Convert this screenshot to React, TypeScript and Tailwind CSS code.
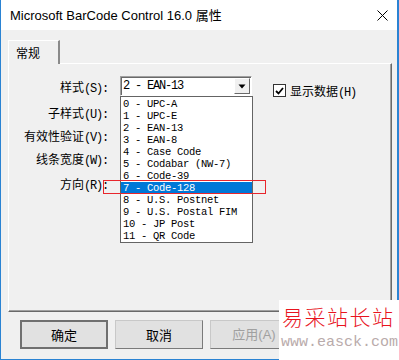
import React from 'react';

const CJK = "font-['Noto_Sans_CJK_SC',sans-serif]";
const MONO = "font-['Liberation_Mono','Noto_Sans_CJK_SC',monospace] text-[12px] tracking-[-1.2px]";
const LIST = "font-['Liberation_Mono',monospace] text-[10.5px] tracking-[-0.3px]";

const STYLES = [
  '0 - UPC-A',
  '1 - UPC-E',
  '2 - EAN-13',
  '3 - EAN-8',
  '4 - Case Code',
  '5 - Codabar (NW-7)',
  '6 - Code-39',
  '7 - Code-128',
  '8 - U.S. Postnet',
  '9 - U.S. Postal FIM',
  '10 - JP Post',
  '11 - QR Code',
];

// label in SimSun style: CJK part + half-width "(X):"
function Label({ zh, hotkey, colon = true }: { zh: string; hotkey: string; colon?: boolean }) {
  return (
    <span className="whitespace-nowrap leading-none">
      <span className={`${CJK} text-[12px] text-black`}>{zh}</span>
      <span className={`${MONO} text-black`}>
        ({hotkey}){colon ? ':' : ''}
      </span>
    </span>
  );
}

function Row({ zh, hotkey, className = '', children }: { zh: string; hotkey: string; className?: string; children?: React.ReactNode }) {
  return (
    <div className={`flex items-start h-[20px] ${className}`}>
      <div className="w-[99px] h-[20px] flex items-center justify-end">
        <Label zh={zh} hotkey={hotkey} />
      </div>
      {children}
    </div>
  );
}

function StyleCombo() {
  return (
    <div className="relative ml-[12px] w-[132px] h-[20px]">
      <div className="w-full h-full bg-white border border-t-[#a0a0a0] border-l-[#a0a0a0] border-r-white border-b-white shadow-[inset_1px_1px_0_#696969] flex items-center pl-[2px]">
        <span className={`${MONO} leading-none text-black flex-1`}>2 - EAN-13</span>
        <div className="w-[16px] h-[16px] mr-[1px] bg-[#f0f0f0] border border-t-white border-l-white border-r-[#696969] border-b-[#696969] flex items-center justify-center">
          <svg width="8" height="5" viewBox="0 0 8 5">
            <path d="M0.5 0.5h7L4 4.5z" fill="#000" />
          </svg>
        </div>
      </div>

      {/* open list */}
      <div className="absolute left-0 top-[20px] w-[133px] bg-white border border-[#646464] pt-[1px] z-20">
        {STYLES.map((s, i) => (
          <div
            key={s}
            className={`h-[12px] leading-[12px] overflow-hidden pl-[2px] whitespace-pre ${LIST} ${
              i === 7 ? 'bg-[#0078d7] text-white' : 'text-black'
            }`}
          >
            {s}
          </div>
        ))}
      </div>
    </div>
  );
}

function Btn({ children, primary, disabled }: { children: React.ReactNode; primary?: boolean; disabled?: boolean }) {
  return (
    <div
      className={`w-[88px] h-[29px] flex items-center justify-center bg-[#e1e1e1] ${
        primary
          ? 'border-2 border-[#6f6f6f]'
          : 'border border-t-[#c8c8c8] border-l-[#c8c8c8] border-r-[#7a7a7a] border-b-[#7a7a7a]'
      }`}
    >
      <span
        className={`text-[13px] leading-none ${
          disabled ? "text-[#a0a0a0] font-['Liberation_Sans','Noto_Sans_CJK_SC',sans-serif]" : `${CJK} text-black`
        }`}
      >
        {children}
      </span>
    </div>
  );
}

export default function App() {
  return (
    <div className="relative w-[399px] h-[360px] overflow-hidden">
      <div className="w-full h-full flex flex-col bg-[#f0f0f0] border-l border-r-2 border-b border-[#2a83d3]">
        {/* Title bar */}
        <div className="h-[30px] bg-white flex items-center justify-between pl-[9px] pr-[9px]">
          <span className="font-['Liberation_Sans','Noto_Sans_CJK_SC',sans-serif] text-[13px] text-black leading-none">
            Microsoft BarCode Control 16.0 属性
          </span>
          <svg width="11" height="11" viewBox="0 0 11 11">
            <path d="M0.5 0.5L10.5 10.5M10.5 0.5L0.5 10.5" stroke="#000" strokeWidth="1" />
          </svg>
        </div>

        {/* Tab strip */}
        <div className="mt-[10px] ml-[7px] flex">
          <div className="relative z-10 -mb-[1px] w-[52px] h-[24px] bg-[#f0f0f0] border-t border-l border-t-white border-l-white border-r-2 border-r-[#8a8a8a] flex items-center pl-[7px]">
            <span className={`${CJK} text-[12px] text-black leading-none`}>常规</span>
          </div>
        </div>

        {/* Tab panel */}
        <div className="ml-[7px] w-[384px] h-[249px] border border-t-white border-l-white border-r-[#696969] border-b-[#696969] shadow-[inset_-1px_-1px_0_#a0a0a0] pt-[12px] flex flex-col">
          <Row zh="样式" hotkey="S">
            <StyleCombo />
            <div className="ml-[21px] mt-[6px] flex items-center gap-[4px]">
              <div className="w-[13px] h-[13px] bg-white border border-[#333] flex items-center justify-center">
                <svg width="9" height="8" viewBox="0 0 9 8">
                  <path d="M1 4L3.5 6.5L8 1" stroke="#000" strokeWidth="1.8" fill="none" />
                </svg>
              </div>
              <Label zh="显示数据" hotkey="H" colon={false} />
            </div>
          </Row>
          <Row zh="子样式" hotkey="U" className="mt-[6px]" />
          <Row zh="有效性验证" hotkey="V" className="mt-[3px]" />
          <Row zh="线条宽度" hotkey="W" className="mt-[3px]" />
          <Row zh="方向" hotkey="R" className="mt-[5px]" />
        </div>

        {/* Buttons */}
        <div className="mt-[8px] ml-[19px] flex gap-[7px]">
          <Btn primary>确定</Btn>
          <Btn>取消</Btn>
          <Btn disabled>应用(A)</Btn>
        </div>
      </div>

      {/* red highlight around the chosen item */}
      <div className="absolute left-[103px] top-[180px] w-[163px] h-[14px] border border-[#e8262c] z-30" />

      {/* watermark */}
      <div className="absolute left-[279px] top-[300px] w-[120px] h-[60px] bg-white z-40 flex flex-col pl-[3px]">
        <span className={`${CJK} mt-[6px] text-[21px] font-light text-[#e8141e] leading-none tracking-[1.5px] whitespace-nowrap`}>
          易采站长站
        </span>
        <span className="mt-[8px] font-['Liberation_Mono',monospace] text-[15px] text-[#b9abab] leading-none whitespace-nowrap -ml-[1px]">
          www.easck.com
        </span>
      </div>
    </div>
  );
}
